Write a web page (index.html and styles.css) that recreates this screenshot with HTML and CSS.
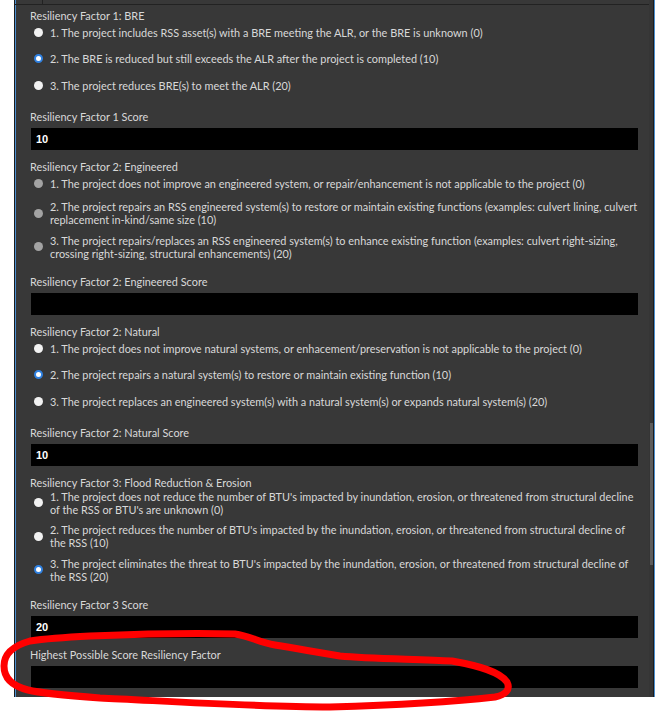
FILE: index.html
```html
<!DOCTYPE html>
<html lang="en">
<head>
<meta charset="utf-8">
<title>Resiliency Factors</title>
<link rel="stylesheet" href="styles.css">
</head>
<body>
<div class="panel">
  <div class="main">
    <div class="topstrip"><div class="tab"></div></div>
    <div class="content">
      <div class="field">
        <div class="label">Resiliency Factor 1: BRE</div>
        <div class="options">
          <div class="option"><span class="radio"></span><span class="text">1. The project includes RSS asset(s) with a BRE meeting the ALR, or the BRE is unknown (0)</span></div>
          <div class="option"><span class="radio checked"></span><span class="text">2. The BRE is reduced but still exceeds the ALR after the project is completed (10)</span></div>
          <div class="option"><span class="radio"></span><span class="text">3. The project reduces BRE(s) to meet the ALR (20)</span></div>
        </div>
      </div>
      <div class="field">
        <div class="label">Resiliency Factor 1 Score</div>
        <div class="input">10</div>
      </div>
      <div class="field">
        <div class="label">Resiliency Factor 2: Engineered</div>
        <div class="options">
          <div class="option"><span class="radio disabled"></span><span class="text">1. The project does not improve an engineered system, or repair/enhancement is not applicable to the project (0)</span></div>
          <div class="option"><span class="radio disabled"></span><span class="text">2. The project repairs an RSS engineered system(s) to restore or maintain existing functions (examples: culvert lining, culvert<br>replacement in-kind/same size (10)</span></div>
          <div class="option"><span class="radio disabled"></span><span class="text">3. The project repairs/replaces an RSS engineered system(s) to enhance existing function (examples: culvert right-sizing,<br>crossing right-sizing, structural enhancements) (20)</span></div>
        </div>
      </div>
      <div class="field">
        <div class="label">Resiliency Factor 2: Engineered Score</div>
        <div class="input"></div>
      </div>
      <div class="field">
        <div class="label">Resiliency Factor 2: Natural</div>
        <div class="options">
          <div class="option"><span class="radio"></span><span class="text">1. The project does not improve natural systems, or enhacement/preservation is not applicable to the project (0)</span></div>
          <div class="option"><span class="radio checked"></span><span class="text">2. The project repairs a natural system(s) to restore or maintain existing function (10)</span></div>
          <div class="option"><span class="radio"></span><span class="text">3. The project replaces an engineered system(s) with a natural system(s) or expands natural system(s) (20)</span></div>
        </div>
      </div>
      <div class="field">
        <div class="label">Resiliency Factor 2: Natural Score</div>
        <div class="input">10</div>
      </div>
      <div class="field">
        <div class="label">Resiliency Factor 3: Flood Reduction &amp; Erosion</div>
        <div class="options">
          <div class="option"><span class="radio"></span><span class="text">1. The project does not reduce the number of BTU's impacted by inundation, erosion, or threatened from structural decline<br>of the RSS or BTU's are unknown (0)</span></div>
          <div class="option"><span class="radio"></span><span class="text">2. The project reduces the number of BTU's impacted by the inundation, erosion, or threatened from structural decline of<br>the RSS (10)</span></div>
          <div class="option"><span class="radio checked"></span><span class="text">3. The project eliminates the threat to BTU's impacted by the inundation, erosion, or threatened from structural decline of<br>the RSS (20)</span></div>
        </div>
      </div>
      <div class="field">
        <div class="label">Resiliency Factor 3 Score</div>
        <div class="input">20</div>
      </div>
      <div class="field">
        <div class="label">Highest Possible Score Resiliency Factor</div>
        <div class="input"></div>
      </div>
    </div>
  </div>
  <div class="scrollbar"><div class="thumb"></div></div>
</div>
<svg class="annotation" width="657" height="712" viewBox="0 0 657 712" aria-hidden="true">
  <path d="M30,641 C50,638 70,637 90,636 C140,634 200,633 235,634 C250,636 258,642 275,645 C300,649 320,653 340,656 C370,659 420,659 452,661 C480,666 500,672 507,682 C511,690 505,695 495,697 C460,701 400,705 330,707 C250,707 150,700 100,698 C60,695 40,693 28,690 C12,686 4,678 4,666 C4,655 12,646 30,641 Z" fill="none" stroke="#ff0000" stroke-width="7" stroke-linejoin="round" stroke-linecap="round"/>
</svg>
</body>
</html>
```

FILE: styles.css
```css
html, body {
  margin: 0;
  padding: 0;
  background: #ffffff;
}

body {
  width: 657px;
  height: 712px;
  overflow: hidden;
  position: relative;
  font-family: "Lato", "Open Sans", sans-serif;
}

.panel {
  margin-left: 14px;
  width: 641px;
  height: 697px;
  box-sizing: border-box;
  background: #383838;
  border-left: 1px solid #1c1c1c;
  border-right: 1px solid #4b8fd0;
  box-shadow: inset 1px 0 0 #4b8fd0;
  display: flex;
  overflow: hidden;
}

.main {
  flex: 1;
  min-width: 0;
  display: flex;
  flex-direction: column;
}

.topstrip {
  height: 4px;
  border-bottom: 1px solid #222222;
  display: flex;
}

.tab {
  width: 27px;
  border-right: 1px solid #222222;
}

.content {
  padding: 3.5px 11px 0 15px;
  display: flex;
  flex-direction: column;
}

.label {
  font-size: 10.9px;
  line-height: 14px;
  height: 14px;
  color: #d8d8d8;
  white-space: nowrap;
}

.options {
  display: flex;
  flex-direction: column;
  gap: 7.5px;
  margin-bottom: 15.5px;
}

.option {
  display: flex;
  align-items: center;
  min-height: 19px;
  padding-left: 4px;
  font-size: 10.9px;
  line-height: 13px;
  color: #d8d8d8;
}

.text {
  white-space: nowrap;
}

.radio {
  flex: none;
  width: 9px;
  height: 9px;
  border-radius: 50%;
  background: #f2f2f2;
  margin-right: 7px;
  box-sizing: border-box;
}

.radio.checked {
  background: #ffffff;
  border: 2px solid #2f80e0;
}

.radio.disabled {
  background: #a3a3a3;
}

.input {
  margin: 4px 0 9.5px 1px;
  height: 22px;
  background: #000000;
  color: #ffffff;
  font-family: "Liberation Sans", Arial, sans-serif;
  font-weight: bold;
  font-size: 11px;
  line-height: 22px;
  padding-left: 5px;
}

.scrollbar {
  flex: none;
  width: 5px;
  box-sizing: border-box;
  border-right: 1px solid #1c1c1c;
  background: #353535;
  position: relative;
}

.thumb {
  position: absolute;
  left: 1px;
  width: 3px;
  top: 423px;
  height: 142px;
  background: #5c5c5c;
}

.annotation {
  position: absolute;
  left: 0;
  top: 0;
  pointer-events: none;
}
```
